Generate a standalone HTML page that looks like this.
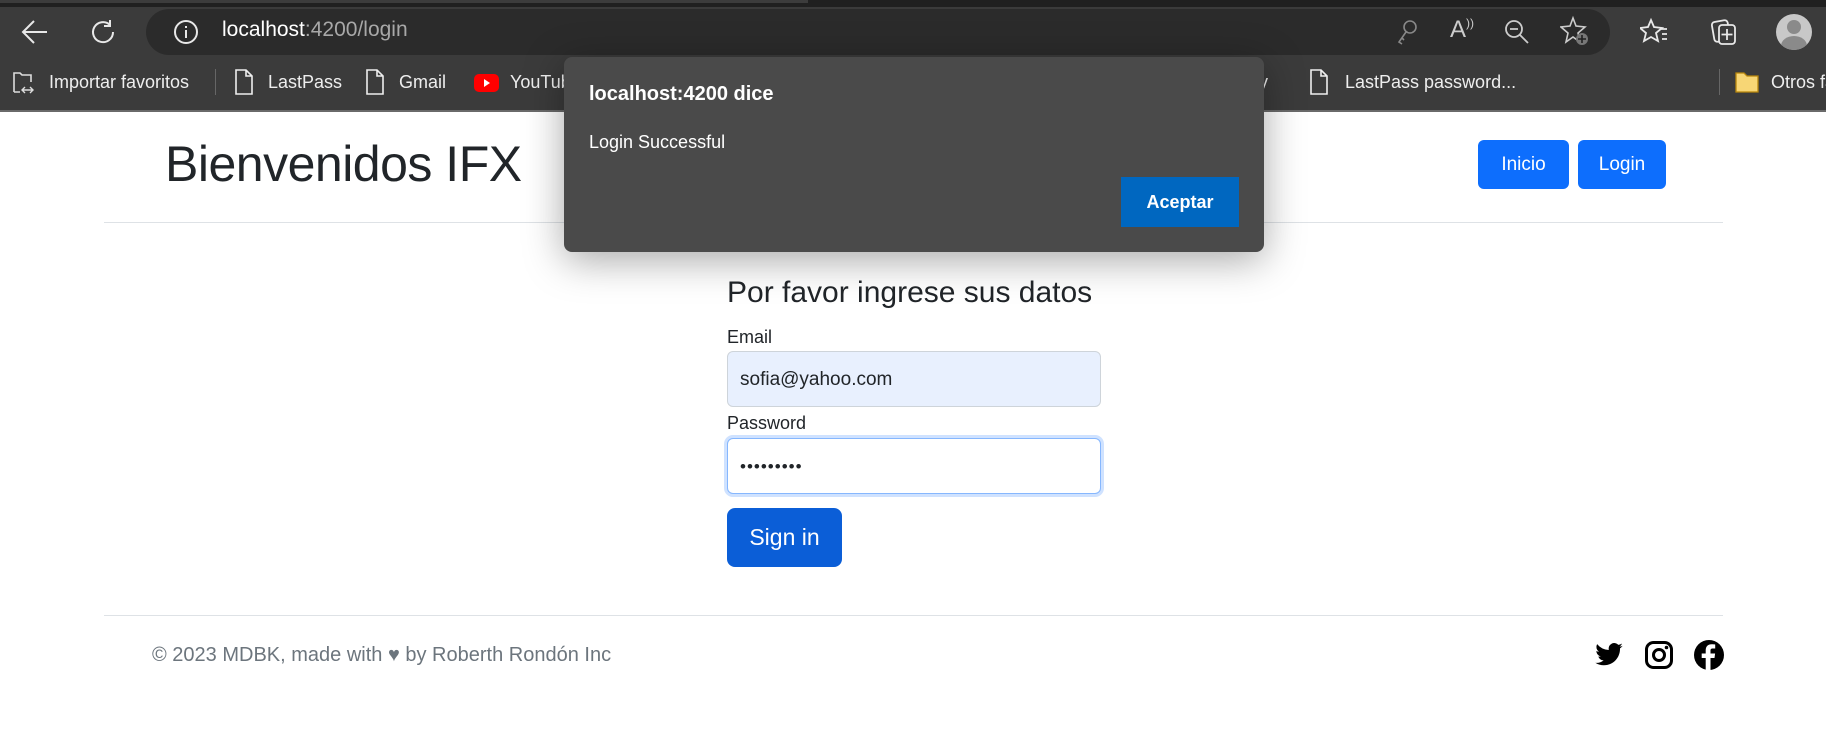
<!DOCTYPE html>
<html><head><meta charset="utf-8"><style>
*{margin:0;padding:0;box-sizing:border-box}
body{width:1826px;height:741px;overflow:hidden;background:#fff;font-family:"Liberation Sans",sans-serif;position:relative}
.abs{position:absolute}
.t{white-space:nowrap}
</style></head><body>
<div class="abs" style="left:0;top:0;width:1826px;height:8px;background:#202020"></div>
<div class="abs" style="left:0;top:0;width:808px;height:3px;background:#3c3c3c"></div>
<div class="abs" style="left:0;top:7px;width:1826px;height:50px;background:#3b3b3b"></div>
<div class="abs" style="left:146px;top:9px;width:1464px;height:46px;background:#2b2b2b;border-radius:23px"></div>
<svg class="abs" style="left:20px;top:18px" width="30" height="28" viewBox="0 0 30 28"><path d="M27 14H4M14 3L3 14l11 11" stroke="#e8e8e8" stroke-width="2" fill="none"/></svg>
<svg class="abs" style="left:88px;top:17px" width="30" height="30" viewBox="0 0 30 30"><path d="M22 8A10 10 0 1 0 25 15M22 3v6h-6" stroke="#e8e8e8" stroke-width="2" fill="none"/></svg>
<svg class="abs" style="left:173px;top:19px" width="26" height="26" viewBox="0 0 26 26"><circle cx="13" cy="13" r="11" stroke="#e8e8e8" stroke-width="2" fill="none"/><path d="M13 11v8M13 7v2" stroke="#e8e8e8" stroke-width="2"/></svg>
<div class="abs t" style="left:222px;top:18px;font-size:21px;color:#fff">localhost<span style="color:#a8a8a8">:4200/login</span></div>
<svg class="abs" style="left:1394px;top:18px" width="26" height="28" viewBox="0 0 26 28"><circle cx="16" cy="9" r="6" stroke="#888" stroke-width="1.6" fill="none"/><path d="M12 14L5 24l3 2M8 20l2 2" stroke="#888" stroke-width="1.6" fill="none"/></svg>
<div class="abs t" style="left:1450px;top:16px;font-size:24px;color:#ccc">A<span style="font-size:12px;vertical-align:top">))</span></div>
<svg class="abs" style="left:1503px;top:18px" width="28" height="28" viewBox="0 0 28 28"><circle cx="11" cy="11" r="8" stroke="#ccc" stroke-width="1.8" fill="none"/><path d="M7 11h8M17 17l8 8" stroke="#ccc" stroke-width="1.8"/></svg>
<svg class="abs" style="left:1560px;top:15px" width="32" height="32" viewBox="0 0 32 32"><path d="M13 3l3 8 9 1-7 6 2 9-7-5-7 5 2-9-7-6 9-1z" stroke="#ccc" stroke-width="1.6" fill="none"/><circle cx="22" cy="24" r="6" fill="#777"/><path d="M22 20v8M18 24h8" stroke="#222" stroke-width="1.6"/></svg>
<svg class="abs" style="left:1640px;top:17px" width="30" height="30" viewBox="0 0 30 30"><path d="M11 3l3 7 8 1-6 5 2 8-7-4-7 4 2-8-6-5 8-1z" stroke="#e8e8e8" stroke-width="1.8" fill="none"/><path d="M20 12h7M22 17h5M22 22h5" stroke="#e8e8e8" stroke-width="1.8"/></svg>
<svg class="abs" style="left:1710px;top:16px" width="30" height="32" viewBox="0 0 30 32"><rect x="3" y="5" width="16" height="20" rx="3" stroke="#e8e8e8" stroke-width="1.8" fill="none" transform="rotate(-10 11 15)"/><rect x="9" y="9" width="16" height="19" rx="3" stroke="#e8e8e8" stroke-width="1.8" fill="#3b3b3b"/><path d="M17 13v11M11.5 18.5h11" stroke="#e8e8e8" stroke-width="1.8"/></svg>
<div class="abs" style="left:1776px;top:14px;width:36px;height:36px;border-radius:50%;background:#c8c8c8;overflow:hidden"><div class="abs" style="left:11px;top:6px;width:14px;height:14px;border-radius:50%;background:#8a8a8a"></div><div class="abs" style="left:5px;top:22px;width:26px;height:20px;border-radius:50%;background:#8a8a8a"></div></div>
<div class="abs" style="left:0;top:56px;width:1826px;height:56px;background:#3b3b3b;border-bottom:2px solid #6a6a6a"></div>
<svg class="abs" style="left:11px;top:70px" width="24" height="26" viewBox="0 0 24 26"><path d="M3 22V3h6l2 2h9v7M3 22h6" stroke="#ddd" stroke-width="1.6" fill="none"/><path d="M12 20h9M14 17l-3 3 3 3M19 17l3 3-3 3" stroke="#ddd" stroke-width="1.4" fill="none"/></svg>
<div class="abs t" style="left:49px;top:72px;font-size:18px;color:#eee">Importar favoritos</div>
<div class="abs" style="left:215px;top:69px;width:1px;height:26px;background:#666"></div>
<svg class="abs" style="left:234px;top:68px" width="20" height="28" viewBox="0 0 20 28"><path d="M2 2h10l6 6v18H2z M12 2v6h6" stroke="#eee" stroke-width="1.6" fill="none"/></svg>
<div class="abs t" style="left:268px;top:72px;font-size:18px;color:#eee">LastPass</div>
<svg class="abs" style="left:365px;top:68px" width="20" height="28" viewBox="0 0 20 28"><path d="M2 2h10l6 6v18H2z M12 2v6h6" stroke="#eee" stroke-width="1.6" fill="none"/></svg>
<div class="abs t" style="left:399px;top:72px;font-size:18px;color:#eee">Gmail</div>
<div class="abs" style="left:474px;top:74px;width:25px;height:18px;border-radius:5px;background:#f00"></div>
<svg class="abs" style="left:482px;top:78px" width="10" height="10" viewBox="0 0 10 10"><path d="M2 1l6 4-6 4z" fill="#fff"/></svg>
<div class="abs t" style="left:510px;top:72px;font-size:18px;color:#eee">YouTube</div>
<div class="abs t" style="left:1250px;top:72px;font-size:18px;color:#eee">ity</div>
<svg class="abs" style="left:1309px;top:68px" width="20" height="28" viewBox="0 0 20 28"><path d="M2 2h10l6 6v18H2z M12 2v6h6" stroke="#eee" stroke-width="1.6" fill="none"/></svg>
<div class="abs t" style="left:1345px;top:72px;font-size:18px;color:#eee">LastPass password...</div>
<div class="abs" style="left:1719px;top:69px;width:1px;height:26px;background:#666"></div>
<svg class="abs" style="left:1734px;top:70px" width="26" height="24" viewBox="0 0 26 24"><path d="M2 3h8l3 3h11v16H2z" fill="#f7d675" stroke="#b8860b" stroke-width="1.3"/></svg>
<div class="abs t" style="left:1771px;top:72px;font-size:18px;color:#eee">Otros favoritos</div>
<div class="abs t" style="left:165px;top:135px;font-size:50px;color:#212529;letter-spacing:-0.5px">Bienvenidos IFX</div>
<div class="abs" style="left:1478px;top:140px;width:91px;height:49px;background:#0d6efd;border-radius:6px;color:#fff;font-size:19px;text-align:center;line-height:49px">Inicio</div>
<div class="abs" style="left:1578px;top:140px;width:88px;height:49px;background:#0d6efd;border-radius:6px;color:#fff;font-size:19px;text-align:center;line-height:49px">Login</div>
<div class="abs" style="left:104px;top:222px;width:1619px;height:1px;background:#dee2e6"></div>
<div class="abs t" style="left:727px;top:276px;font-size:30px;color:#212529">Por favor ingrese sus datos</div>
<div class="abs t" style="left:727px;top:327px;font-size:18px;color:#212529">Email</div>
<div class="abs" style="left:727px;top:351px;width:374px;height:56px;background:#e8f0fe;border:1px solid #ced4da;border-radius:6px"></div>
<div class="abs t" style="left:740px;top:369px;font-size:19px;color:#212529">sofia@yahoo.com</div>
<div class="abs t" style="left:727px;top:413px;font-size:18px;color:#212529">Password</div>
<div class="abs" style="left:727px;top:438px;width:374px;height:56px;background:#fff;border:1px solid #86b7fe;border-radius:6px;box-shadow:0 0 0 3px rgba(13,110,253,.2)"></div>
<div class="abs t" style="left:740px;top:457px;font-size:17px;color:#212529;letter-spacing:1px">•••••••••</div>
<div class="abs" style="left:727px;top:508px;width:115px;height:59px;background:#0b5ed7;border-radius:8px;color:#fff;font-size:23px;text-align:center;line-height:59px">Sign in</div>
<div class="abs" style="left:104px;top:615px;width:1619px;height:1px;background:#dee2e6"></div>
<div class="abs t" style="left:152px;top:644px;font-size:20px;color:#6c757d">© 2023 MDBK, made with ♥ by Roberth Rondón Inc</div>
<svg class="abs" style="left:1594px;top:640px" width="30" height="30" viewBox="0 0 24 24"><path d="M23 4.6c-.8.4-1.7.6-2.6.7.9-.6 1.6-1.4 2-2.5-.9.5-1.900.9-2.9 1.1A4.5 4.5 0 0 0 11.8 8 12.8 12.8 0 0 1 2.5 3.3a4.5 4.5 0 0 0 1.4 6c-.7 0-1.4-.2-2-.6 0 2.2 1.6 4 3.6 4.400-.7.2-1.4.2-2 .1.6 1.8 2.2 3.1 4.2 3.1A9 9 0 0 1 1 18.2 12.8 12.8 0 0 0 7.9 20.2c8.3 0 12.9-6.9 12.9-12.9v-.6c.9-.6 1.6-1.4 2.2-2.1z" fill="#000"/></svg>
<svg class="abs" style="left:1644px;top:640px" width="30" height="30" viewBox="0 0 30 30"><rect x="2.5" y="2.5" width="25" height="25" rx="7" stroke="#000" stroke-width="3" fill="none"/><circle cx="15" cy="15" r="5.5" stroke="#000" stroke-width="3" fill="none"/><circle cx="22.5" cy="7.5" r="1.8" fill="#000"/></svg>
<svg class="abs" style="left:1694px;top:640px" width="30" height="30" viewBox="0 0 30 30"><circle cx="15" cy="15" r="15" fill="#000"/><path d="M16.5 30V18h4l.6-4.5h-4.6v-2.8c0-1.3.4-2.2 2.2-2.2h2.5V4.5c-.4 0-1.900-.2-3.6-.2-3.5 0-5.900 2.1-5.900 6v3.2h-4V18h4v12z" fill="#fff"/></svg>
<div class="abs" style="left:564px;top:57px;width:700px;height:195px;background:#4a4a4a;border-radius:8px;box-shadow:0 8px 40px rgba(0,0,0,.35)"></div>
<div class="abs t" style="left:589px;top:83px;font-size:20px;font-weight:bold;color:#fff">localhost:4200 dice</div>
<div class="abs t" style="left:589px;top:132px;font-size:18px;color:#fff">Login Successful</div>
<div class="abs" style="left:1121px;top:177px;width:118px;height:50px;background:#0067c0;color:#fff;font-size:18px;font-weight:bold;text-align:center;line-height:50px">Aceptar</div>
</body></html>
